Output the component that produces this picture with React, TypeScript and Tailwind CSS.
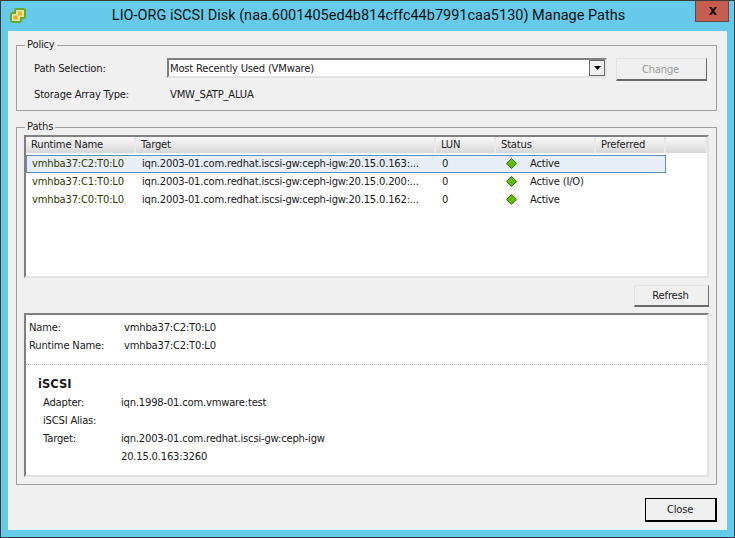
const font = "font-['DejaVu_Sans',sans-serif]";

const paths = [
  { name: 'vmhba37:C2:T0:L0', target: 'iqn.2003-01.com.redhat.iscsi-gw:ceph-igw:20.15.0.163:...', status: 'Active', selected: true },
  { name: 'vmhba37:C1:T0:L0', target: 'iqn.2003-01.com.redhat.iscsi-gw:ceph-igw:20.15.0.200:...', status: 'Active (I/O)', selected: false },
  { name: 'vmhba37:C0:T0:L0', target: 'iqn.2003-01.com.redhat.iscsi-gw:ceph-igw:20.15.0.162:...', status: 'Active', selected: false },
];

const columns = [
  { label: 'Runtime Name', width: 'w-[110px]' },
  { label: 'Target', width: 'w-[300px]' },
  { label: 'LUN', width: 'w-[60px]' },
  { label: 'Status', width: 'w-[100px]' },
  { label: 'Preferred', width: 'w-[70px]' },
  { label: '', width: 'flex-1' },
];

function AppLogo() {
  return (
    <svg width="16" height="16" viewBox="0 0 16 16">
      <path d="M6.500 1h7a1.500 1.500 0 0 1 1.500 1.500v6a1.500 1.500 0 0 1-1.500 1.500H11v2.500a1.500 1.500 0 0 1-1.500 1.500h-7A1.500 1.500 0 0 1 1 12.500v-6A1.500 1.500 0 0 1 2.500 5H5V2.500A1.500 1.500 0 0 1 6.500 1z" fill="#dbe9a8" stroke="#6da52a" strokeWidth="2" />
      <rect x="3.500" y="7.500" width="4" height="4" fill="#f2a61e" />
      <rect x="8" y="3.500" width="4" height="4" fill="#f6b42c" />
    </svg>
  );
}

function StatusDiamond() {
  return (
    <svg className="mt-[1px]" width="11" height="11" viewBox="0 0 11 11">
      <path d="M5.500 0.500 10.500 5.500 5.500 10.500 0.500 5.500z" fill="#62bb07" stroke="#2f7d05" strokeWidth="1" />
    </svg>
  );
}

function Group({ title, className, children }: { title: string; className: string; children: React.ReactNode }) {
  return (
    <fieldset className={`border border-[#a0a0a0] rounded-none p-0 min-w-0 ${className}`}>
      <legend className="ml-[8px] px-[2px] h-[14px] leading-[14px]">{title}</legend>
      {children}
    </fieldset>
  );
}

function Button({ children, className, disabled }: { children: React.ReactNode; className: string; disabled?: boolean }) {
  return (
    <div className={`flex items-center justify-center pr-[2px] bg-[#f0f0f0] border border-[#e3e3e3] border-r-[#696969] border-b-[#696969] border-b-2 ${disabled ? 'text-[#9a9a9a] pt-[1px]' : ''} ${className}`}>
      {children}
    </div>
  );
}

function PathsTable() {
  return (
    <div className="h-[143px] mx-[7px] mt-[-5px] bg-white border-2 border-t-[#808080] border-l-[#808080] border-r-[#e3e3e3] border-b-[#e3e3e3]">
      <div className="flex h-[16px]">
        {columns.map((c) => (
          <div key={c.label} className={`${c.width} pl-[5px] leading-[15px] bg-gradient-to-b from-[#fafafa] to-[#d6d6d6] border-r-2 border-[#e8e8e8] text-[#222]`}>
            {c.label}
          </div>
        ))}
      </div>
      <div className="w-[640px] mt-[2px]">
        {paths.map((p) => (
          <div key={p.name} className={`flex h-[18px] items-center pb-[2px] border ${p.selected ? 'bg-[#e8eef6] border-[#5d8db8]' : 'border-transparent'}`}>
            <div className="w-[110px] pl-[5px] text-[#303a00] whitespace-nowrap">{p.name}</div>
            <div className="w-[300px] pl-[5px] whitespace-nowrap overflow-hidden">{p.target}</div>
            <div className="w-[60px] pl-[5px]">0</div>
            <div className="flex items-center pl-[9px]">
              <StatusDiamond />
              <span className="ml-[13px] whitespace-nowrap">{p.status}</span>
            </div>
          </div>
        ))}
      </div>
    </div>
  );
}

function Details() {
  return (
    <div className="h-[164px] mx-[7px] mt-[6px] bg-white border-2 border-t-[#808080] border-l-[#808080] border-r-[#e3e3e3] border-b-[#e3e3e3]">
      <div className="pt-[3px] pb-[10px] border-b border-dotted border-[#b0b0b0]">
        <div className="flex h-[18px] items-center pl-[3px]"><span className="w-[95px]">Name:</span><span>vmhba37:C2:T0:L0</span></div>
        <div className="flex h-[18px] items-center pl-[3px]"><span className="w-[95px]">Runtime Name:</span><span>vmhba37:C2:T0:L0</span></div>
      </div>
      <div className="pl-[12px] pt-[9px]">
        <div className="h-[19px] leading-[20px] font-bold text-[11.500px] tracking-normal">iSCSI</div>
        <div className="flex h-[18px] items-center pl-[5px]"><span className="w-[78px]">Adapter:</span><span>iqn.1998-01.com.vmware:test</span></div>
        <div className="flex h-[18px] items-center pl-[5px]"><span className="w-[78px]">iSCSI Alias:</span></div>
        <div className="flex h-[18px] items-center pl-[5px]"><span className="w-[78px]">Target:</span><span>iqn.2003-01.com.redhat.iscsi-gw:ceph-igw</span></div>
        <div className="flex h-[18px] items-center pl-[83px]">20.15.0.163:3260</div>
      </div>
    </div>
  );
}

export default function App() {
  return (
    <div className={`w-[735px] h-[538px] flex flex-col bg-[#66cbea] border border-[#3c3c3c] text-[10px] tracking-[-0.2px] text-[#1a1a1a] ${font}`}>
      {/* Title bar */}
      <div className="h-[30px] shrink-0 flex items-start pl-[9px]">
        <div className="mt-[7px]"><AppLogo /></div>
        <div className="flex-1 text-center pt-[4px] pl-[16px] text-[14.500px] tracking-normal leading-[22px] font-['Roboto',sans-serif] text-[#111]">
          LIO-ORG iSCSI Disk (naa.6001405ed4b814cffc44b7991caa5130) Manage Paths
        </div>
        <div className="w-[34px] h-[21px] shrink-0 mr-[5px] pl-[2px] bg-[#c75c50] border border-[#5c4a48] border-t-0 flex items-center justify-center">
          <svg width="10" height="8" viewBox="0 0 10 8">
            <path d="M1 0h2.400L5 2.200 6.600 0H9L6.200 4 9 8H6.600L5 5.800 3.400 8H1L3.800 4z" fill="#111" />
          </svg>
        </div>
      </div>

      {/* Dialog body */}
      <div className="flex-1 mx-[7px] mb-[7px] bg-[#f0f0f0] flex flex-col pl-[8px] pr-[10px] pt-[7px]">
        <Group title="Policy" className="h-[73px]">
          <div className="flex mt-[6px] pl-[17px]">
            <div className="w-[133px] leading-[21px]">Path Selection:</div>
            <div className="w-[440px] h-[20px] flex bg-white border-2 border-t-[#808080] border-l-[#808080] border-r-[#e3e3e3] border-b-[#e3e3e3]">
              <div className="flex-1 pl-[1px] leading-[18px]">Most Recently Used (VMware)</div>
              <div className="w-[16px] h-[16px] bg-[#f0f0f0] border border-[#696969] flex items-center justify-center">
                <svg width="7" height="4" viewBox="0 0 7 4"><path d="M0 0h7L3.500 4z" fill="#000" /></svg>
              </div>
            </div>
            <Button disabled className="w-[91px] h-[23px] ml-[9px]">Change</Button>
          </div>
          <div className="flex pl-[17px] mt-[6px]">
            <div className="w-[136px]">Storage Array Type:</div>
            <div>VMW_SATP_ALUA</div>
          </div>
        </Group>

        <Group title="Paths" className="h-[365px] mt-[9px]">
          <div className="h-[1px] mb-[5px]" />
          <PathsTable />
          <div className="flex justify-end mr-[7px] mt-[7px]">
            <Button className="w-[75px] h-[22px]">Refresh</Button>
          </div>
          <Details />
        </Group>

        <div className="flex justify-end mt-[13px]">
          <div className="w-[72px] h-[24px] flex items-center justify-center pr-[1px] bg-[#f0f0f0] border border-black border-b-2 border-r-2">
            Close
          </div>
        </div>
      </div>
    </div>
  );
}
